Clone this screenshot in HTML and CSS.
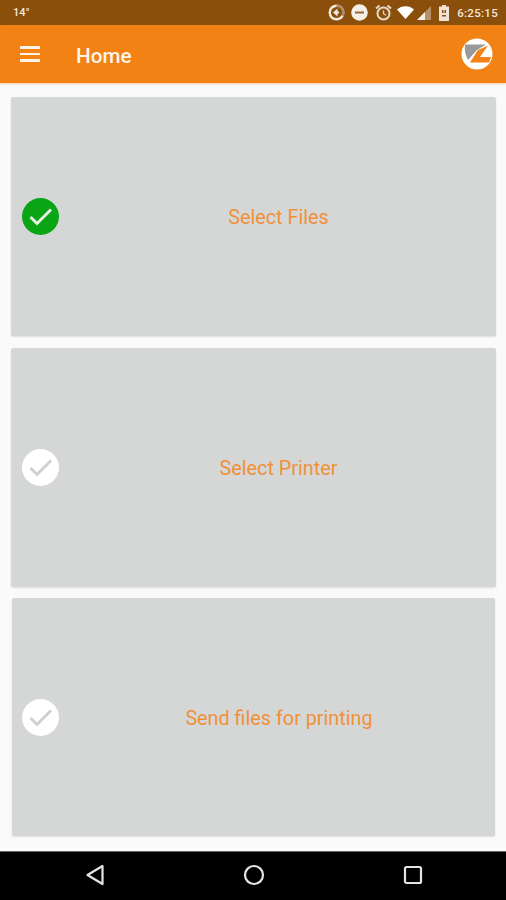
FILE: index.html
```html
<!DOCTYPE html>
<html lang="en">
<head>
  <meta charset="UTF-8" />
  <meta name="viewport" content="width=device-width, initial-scale=1.0"/>
  <title>Home</title>
  <link rel="stylesheet" href="styles.css">
</head>
<body>
  <div class="status-bar">
    <span class="temp">14°</span>
    <div class="status-icons">
      <svg class="st-icon" width="17" height="17" viewBox="0 0 17 17">
        <circle cx="8.5" cy="8.5" r="8" fill="#f3e9de"/>
        <path d="M8.5 8.5V.5A8 8 0 0 1 15.500 12.500z" fill="#b08a62"/>
        <circle cx="8.5" cy="8.5" r="5.500" fill="#8a4f0a"/>
        <path d="M9.500 4.500L5 8.500l4.500 4z" fill="#f3e9de"/>
        <circle cx="9.800" cy="8.500" r="1.300" fill="#f3e9de"/>
      </svg>
      <svg class="st-icon" width="17" height="17" viewBox="0 0 17 17">
        <circle cx="8.5" cy="8.5" r="8.300" fill="#f6efe8"/>
        <rect x="4" y="7.500" width="9" height="2" fill="#8f6a44"/>
      </svg>
      <svg class="st-icon alarm" width="17" height="17" viewBox="0 0 17 17">
        <circle cx="8.5" cy="9.500" r="6" fill="none" stroke="#e8d8c8" stroke-width="2"/>
        <path d="M8.5 6.500v3.200l2.500 1.500" fill="none" stroke="#e8d8c8" stroke-width="1.300"/>
        <path d="M1 4.500L4.500 1.500M16 4.500L12.500 1.500" stroke="#e8d8c8" stroke-width="2"/>
      </svg>
      <svg class="st-icon wifi" width="17" height="13" viewBox="0 0 17 13">
        <path d="M0 3.500C4.500-1 12.500-1 17 3.500L8.500 13z" fill="#fff"/>
      </svg>
      <svg class="st-icon signal" width="14" height="14" viewBox="0 0 14 14">
        <path d="M0 14L14 0v14z" fill="#b8906a"/>
        <path d="M0 14L8 6v8z" fill="#f6efe8"/>
      </svg>
      <svg class="st-icon battery" width="10" height="16" viewBox="0 0 10 16">
        <path d="M3 0h4v1.500h3V16H0V1.500h3z" fill="#efe3d6"/>
        <path d="M3 5h1.500v3H3zM5.500 5H7v3H5.500zM3 10h4v1.500H3z" fill="#8a4f0a"/>
      </svg>
      <span class="clock">6:25:15</span>
    </div>
  </div>

  <header class="app-bar">
    <div class="menu-btn"><span></span><span></span><span></span></div>
    <h1>Home</h1>
    <svg class="logo" width="32" height="32" viewBox="0 0 32 32">
      <circle cx="16" cy="16" r="15.500" fill="#fff"/>
      <path d="M4 6.500H25L16 12 7 22Q3 15 4 6.500z" fill="#9a9a9a"/>
      <path d="M27 7.500L19 19H30L28 24.500H9L17 12z" fill="#f28213"/>
    </svg>
  </header>

  <main class="content">
    <div class="card card-wide">
      <svg class="check" width="37" height="37" viewBox="0 0 37 37">
        <circle cx="18.500" cy="18.500" r="18.500" fill="#0aa514"/>
        <path d="M8.500 19l6.500 6.500L29 11.500" fill="none" stroke="#e6efe4" stroke-width="3"/>
      </svg>
      <span class="card-label">Select Files</span>
    </div>
    <div class="card card-wide">
      <svg class="check" width="37" height="37" viewBox="0 0 37 37">
        <circle cx="18.500" cy="18.500" r="18.500" fill="#fff"/>
        <path d="M8.500 19l6.500 6.500L29 11.500" fill="none" stroke="#cfd0cf" stroke-width="3"/>
      </svg>
      <span class="card-label">Select Printer</span>
    </div>
    <div class="card card-narrow">
      <svg class="check" width="37" height="37" viewBox="0 0 37 37">
        <circle cx="18.500" cy="18.500" r="18.500" fill="#fff"/>
        <path d="M8.500 19l6.500 6.500L29 11.500" fill="none" stroke="#cfd0cf" stroke-width="3"/>
      </svg>
      <span class="card-label">Send files for printing</span>
    </div>
  </main>

  <nav class="nav-bar">
    <svg width="20" height="22" viewBox="0 0 20 22">
      <path d="M17.500 2L2.500 11l15 9z" fill="none" stroke="#e4e4e4" stroke-width="2.200" stroke-linejoin="round"/>
    </svg>
    <svg width="22" height="22" viewBox="0 0 22 22">
      <circle cx="11" cy="11" r="9" fill="none" stroke="#e4e4e4" stroke-width="2.200"/>
    </svg>
    <svg width="20" height="20" viewBox="0 0 20 20">
      <rect x="2" y="2" width="16" height="16" rx="1.500" fill="none" stroke="#e4e4e4" stroke-width="2.200"/>
    </svg>
  </nav>
</body>
</html>
```

FILE: styles.css
```css
* {
  box-sizing: border-box;
  margin: 0;
  padding: 0;
}

body {
  width: 506px;
  height: 900px;
  overflow: hidden;
  display: flex;
  flex-direction: column;
  background-color: #fafafa;
  font-family: 'Roboto', sans-serif;
}

.status-bar {
  height: 25px;
  flex: none;
  display: flex;
  align-items: center;
  justify-content: space-between;
  padding: 0 8px 0 13px;
  background-color: #8a4f0a;
  color: #f3e9de;
}

.temp {
  font-size: 11px;
  font-weight: 500;
}

.status-icons {
  display: flex;
  align-items: center;
  gap: 6px;
}

.st-icon {
  display: block;
}

.alarm {
  margin-left: 1px;
}

.wifi {
  margin-left: -1px;
}

.signal {
  margin-left: -3px;
}

.battery {
  margin-left: 2px;
}

.clock {
  font-size: 11.500px;
  font-weight: 500;
  letter-spacing: 0.300px;
  margin-left: 2px;
}

.app-bar {
  height: 58px;
  flex: none;
  display: flex;
  align-items: center;
  padding: 0 13px 0 20px;
  background-color: #f28213;
  color: #fdf6ee;
  box-shadow: 0 1px 2px rgba(242,130,19,0.4);
}

.menu-btn {
  width: 20px;
  display: flex;
  flex-direction: column;
  gap: 4px;
}

.menu-btn span {
  display: block;
  height: 2.500px;
  background-color: #fdf3e8;
}

.app-bar h1 {
  flex: 1;
  margin-left: 36px;
  padding-top: 3px;
  font-size: 20.700px;
  font-weight: 500;
}

.content {
  flex: 1;
  display: flex;
  flex-direction: column;
  gap: 11.500px;
  padding-top: 14px;
}

.card {
  height: 239px;
  flex: none;
  display: flex;
  align-items: center;
  background-color: #d5d7d6;
  border-radius: 2px;
  box-shadow: 0 1px 2px rgba(0,0,0,0.12);
}

.card-wide {
  margin: 0 10px 0 11px;
  padding-left: 11px;
}

.card-narrow {
  height: 238px;
  margin: 0 11px 0 12px;
  padding-left: 10px;
}

.check {
  flex: none;
}

.card-label {
  flex: 1;
  margin-left: 13px;
  margin-right: 11px;
  padding-top: 2px;
  text-align: center;
  font-size: 19.800px;
  color: #f0913a;
}

.card-narrow .card-label {
  margin-left: 14px;
  margin-right: 10px;
}

.nav-bar {
  height: 49px;
  flex: none;
  display: flex;
  align-items: center;
  justify-content: space-between;
  padding: 0 83px 2px 85px;
  background-color: #000;
  border-top: 1px solid #666;
}

.nav-bar svg {
  display: block;
}
```
